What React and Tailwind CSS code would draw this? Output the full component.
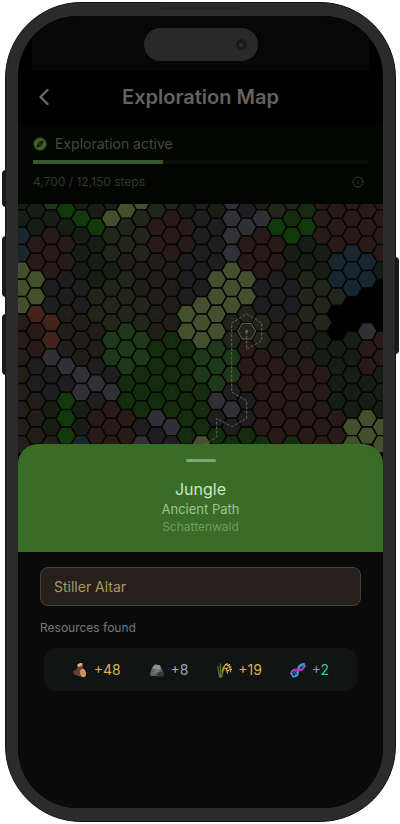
import { ChevronLeft, Info } from "lucide-react";

const HEX_RADIUS = 10;
const COLUMN_STEP = 15.05;
const ROW_STEP = 17.38;

const terrain = {
    D: "#171c15",
    T: "#151d16",
    G: "#12380b",
    L: "#434f2d",
    O: "#22251a",
    N: "#211e19",
    R: "#271a17",
    E: "#43241d",
    P: "#1e1d20",
    S: "#303036",
    B: "#192630",
    J: "#1e381a",
    V: "#152b0d",
};

// one string per column, top to bottom, K = unexplored
const columns = [
    "DDBBLLLRRNNNNNN",
    "DTRRLLERRPPNNN",
    "JDRRRPPEESPPDDN",
    "GDRRPPNNNSPGGG",
    "DGDDDPPNNNSSDDB",
    "DGDDDOONNPSPRR",
    "DLOODOOOJJPSRRR",
    "LOONOOOJJJVVRR",
    "LOOONNOOJJVVVPS",
    "ORRNNNNNVVVVSP",
    "ORRRNNNNVVVVVSP",
    "DRRPPPLLVVVVVV",
    "PPPPPPLLLJJVVVL",
    "DPPPLLLLJJJSPV",
    "SSSSLLLOOJJPSPV",
    "PSRRLLOORRRPPV",
    "PSRRRPPOORRRRRV",
    "OGRRPPPNNRRRRR",
    "OVGDDPPNNNRRRRV",
    "VGDDOOONNRRRRR",
    "RRRDDOOODDRRRRR",
    "RRRBBOKKTTTTRR",
    "RRRBBBKKTTTTTLL",
    "RRRBBKKSRRTTLL",
    "RRRRTKKKRRTTTLL",
];

const resources = [
    { name: "Wood", amount: "+48", color: "text-[#d9b441]", Icon: WoodIcon },
    { name: "Stone", amount: "+8", color: "text-[#a3a8b4]", Icon: StoneIcon },
    { name: "Grain", amount: "+19", color: "text-[#d9b441]", Icon: GrainIcon },
    { name: "DNA", amount: "+2", color: "text-[#45bfa5]", Icon: DnaIcon },
];

function hexPoints(cx, cy, r) {
    return [0, 60, 120, 180, 240, 300]
        .map((deg) => {
            const a = (deg * Math.PI) / 180;
            return `${(cx + r * Math.cos(a)).toFixed(2)},${(cy + r * Math.sin(a)).toFixed(2)}`;
        })
        .join(" ");
}

function HexMap() {
    return (
        <svg viewBox="0 0 365 262" preserveAspectRatio="xMidYMin slice" className="block h-[262px] w-full bg-black" role="img" aria-label="Map">
            {columns.map((column, c) =>
                column.split("").map((type, r) => {
                    if (type === "K") return null;
                    const x = 3 + c * COLUMN_STEP;
                    const y = (c % 2 ? 5.7 : -3) + r * ROW_STEP;
                    return (
                        <g key={`${c}-${r}`}>
                            <polygon points={hexPoints(x, y, HEX_RADIUS)} fill={terrain[type]} stroke="#050602" strokeWidth="1.4" />
                            {(type === "N" || type === "V") && (c + r) % 3 === 0 && (
                                <circle cx={x + 1} cy={y - 1} r="0.7" fill="#6b6238" opacity="0.35" />
                            )}
                        </g>
                    );
                })
            )}
            <g fill="none" stroke="#696448" strokeWidth="1" strokeDasharray="3 1.5">
                <path d="M228.7 127.3V145.3L243.7 136.7V119L228.7 110L213.7 119V188L228.7 197V214.3L213.7 222.7L198.7 214.3V233L183 242" />
                <polygon points={hexPoints(228.7, 127.3, 9)} strokeDasharray="none" />
            </g>
            <circle cx="228.7" cy="127.3" r="1.5" fill="#6d6036" />
        </svg>
    );
}

function CompassIcon() {
    return (
        <svg viewBox="0 0 14 14" className="size-3.5" aria-hidden="true">
            <circle cx="7" cy="7" r="6.5" fill="#3f5c2c" />
            <path d="M10.8 3.2 8.4 8.4 3.2 10.8 5.6 5.6Z" fill="#060b04" />
            <circle cx="7" cy="7" r="0.9" fill="#3f5c2c" />
        </svg>
    );
}

function WoodIcon() {
    return (
        <svg viewBox="0 0 16 16" className="size-4" aria-hidden="true">
            <path d="M5.5 3 9.5 1.5l1.5 2-.5 4.5-5-1Z" fill="#6a4634" />
            <ellipse cx="8" cy="2.8" rx="2.8" ry="1.6" transform="rotate(-20 8 2.8)" fill="#d8b98a" />
            <path d="M1.2 9.6 6.5 5.6l6 1.6 1.2 5.6-3.2 2.2L2 12.6Z" fill="#6b4638" />
            <path d="M2.2 10.5 7.5 7.4M3 12.2l5-1.7" stroke="#4a2f28" strokeWidth="0.7" />
            <ellipse cx="11" cy="11" rx="2.8" ry="4.2" transform="rotate(-12 11 11)" fill="#d89a72" />
            <ellipse cx="11.1" cy="11" rx="1.3" ry="2.3" transform="rotate(-12 11.1 11)" fill="none" stroke="#b87b58" strokeWidth="0.6" />
        </svg>
    );
}

function StoneIcon() {
    return (
        <svg viewBox="0 0 16 16" className="size-4" aria-hidden="true">
            <path d="M1 12 2.6 6.5 6 2.5l5 .8L13.6 9l1.6 3.4-1.4 1.8-12-.2Z" fill="#5d5e60" />
            <path d="M3 6 6 2.5l5 .8 1 4.2-5.8-.2Z" fill="#909090" />
            <path d="m6.2 7.3 5.8.2-2.5 3.2L3 12Z" fill="#747577" />
            <path d="m7.5 13 1.7-3 3.6-.6 2.4 3-1.4 1.8H8Z" fill="#37393b" />
        </svg>
    );
}

function GrainIcon() {
    return (
        <svg viewBox="0 0 16 16" className="size-4" fill="none" strokeLinecap="round" aria-hidden="true">
            <path d="M3.5 15 1.8 4.5M4.5 15V2m1 13L8.5 4.5" stroke="#4f7f2d" strokeWidth="1.3" />
            <path d="M6 10c1-5 3-7.5 5-7 2.3.5 3.3 3 3.6 7" stroke="#c9953c" strokeWidth="1.2" />
            <path d="M7.5 7c2-2 3.5-.5 4 4.5" stroke="#c9953c" strokeWidth="1.2" />
            <path d="m9.5 2.6 1.8-.8M12 3.6l1.6-1M13.4 5.4l1.4-.6M14 7.6l1.4-.2M10.4 6.6l1-.6M11.2 8.8l1.3-.3" stroke="#e6b95d" strokeWidth="1.3" />
        </svg>
    );
}

function DnaIcon() {
    return (
        <svg viewBox="0 0 16 16" className="size-4" fill="none" strokeLinecap="round" aria-hidden="true">
            <path d="m3 9.5 3 3M4.8 8.5l3 3M8.8 5l2.7 2.8M11 3.5l2.3 2.6" stroke="#4b5cc7" strokeWidth="1.2" />
            <path d="M3 14.5c4 .4 5.2-2.1 5-5.5s1.4-6.4 6-7" stroke="#38a7d1" strokeWidth="1.8" />
            <path d="M1 11.5C2 7.5 5 7 8 8s5 .3 6.5-4" stroke="#bd39be" strokeWidth="2" />
            <path d="M1.4 11.5 3 14M12.7 2.2 15 4" stroke="#38a7d1" strokeWidth="1.5" />
        </svg>
    );
}

function Header() {
    return (
        <header>
            <div className="mx-3.5 flex h-[54px] items-start justify-center bg-[#070707] pt-3">
                <div className="flex h-[33px] w-[114px] items-center justify-end rounded-full bg-[#292929] pr-[11px]">
                    <span className="flex size-[11px] items-center justify-center rounded-full bg-[#1b1b1c]">
                        <span className="size-1 rounded-full bg-[#303033]" />
                    </span>
                </div>
            </div>
            <div className="grid h-[54px] grid-cols-[1fr_auto_1fr] items-center px-3">
                <button type="button" aria-label="Back" className="flex size-7 items-center justify-center text-[#6a6a67]">
                    <ChevronLeft size={28} strokeWidth={2} className="shrink-0" />
                </button>
                <h1 className="text-xl leading-6 font-semibold text-[#62625f]">Exploration Map</h1>
            </div>
        </header>
    );
}

function ExplorationStatus() {
    const steps = 4700;
    const goal = 12150;

    return (
        <section className="h-20 bg-[#030502] px-[15px] pt-3">
            <div className="flex items-center gap-2">
                <CompassIcon />
                <span className="text-sm leading-4 text-[#454843]">Exploration active</span>
            </div>
            <div className="mt-2 h-1 bg-[#0a0d08]">
                <div className="h-full bg-[#385829]" style={{ width: `${(steps / goal) * 100}%` }} />
            </div>
            <div className="mt-2.5 flex items-center justify-between">
                <span className="text-xs leading-4 text-[#343632]">4,700 / 12,150 steps</span>
                <button type="button" aria-label="Step details" className="mr-1 text-[#393b37]">
                    <Info size={12} strokeWidth={2} />
                </button>
            </div>
        </section>
    );
}

function LocationSheet() {
    return (
        <section className="relative -mt-[22px] flex flex-1 flex-col">
            <div className="h-[108px] rounded-t-[20px] bg-[#396c26] pt-[15px] text-center">
                <div className="mx-auto h-[3px] w-[30px] rounded-full bg-[#82a575]" />
                <h2 className="mt-[15px] text-base leading-6 text-[#c9e8c1]">Jungle</h2>
                <p className="text-[13px] leading-4 text-[#9fc392]">Ancient Path</p>
                <p className="mt-0.5 text-xs leading-4 text-[#729b65]">Schattenwald</p>
            </div>
            <div className="flex-1 bg-[#0a0a0a] px-[22px] pt-[15px]">
                <div className="flex h-[39px] items-center rounded-lg border border-[#474332] bg-[#25211a] px-[13px] text-sm text-[#a69a61]">
                    Stiller Altar
                </div>
                <h3 className="mt-3 text-xs leading-5 text-[#777776]">Resources found</h3>
                <ul className="mx-1 mt-2.5 flex h-[43px] items-center justify-evenly rounded-xl bg-[#121313]">
                    {resources.map(({ name, amount, color, Icon }) => (
                        <li key={name} className="flex items-center gap-1.5" title={name}>
                            <Icon />
                            <span className={`text-sm leading-5 ${color}`}>{amount}</span>
                        </li>
                    ))}
                </ul>
            </div>
        </section>
    );
}

function App() {
    return (
        <div className="relative flex min-h-screen flex-col bg-white pt-0.5 pr-1 pb-0.5 pl-[5px] font-['Inter',sans-serif]">
            <span className="absolute top-[170px] left-0.5 h-[37px] w-1 rounded-l-sm bg-[#1c1c1c]" />
            <span className="absolute top-[236px] left-0.5 h-[61px] w-1 rounded-l-sm bg-[#1c1c1c]" />
            <span className="absolute top-[314px] left-0.5 h-[61px] w-1 rounded-l-sm bg-[#1c1c1c]" />
            <span className="absolute top-[257px] right-px h-[97px] w-1 rounded-r-sm bg-[#1c1c1c]" />
            <div className="relative flex flex-1 flex-col rounded-[76px] border border-[#17130f] bg-[#2b2b2b] px-3 py-[13px]">
                <span className="absolute top-1 left-1/2 h-[3px] w-20 -translate-x-1/2 rounded-full bg-[#242424]" />
                <main className="flex flex-1 flex-col overflow-hidden rounded-[60px] bg-black">
                    <Header />
                    <ExplorationStatus />
                    <HexMap />
                    <LocationSheet />
                </main>
            </div>
        </div>
    );
}

export default App;
